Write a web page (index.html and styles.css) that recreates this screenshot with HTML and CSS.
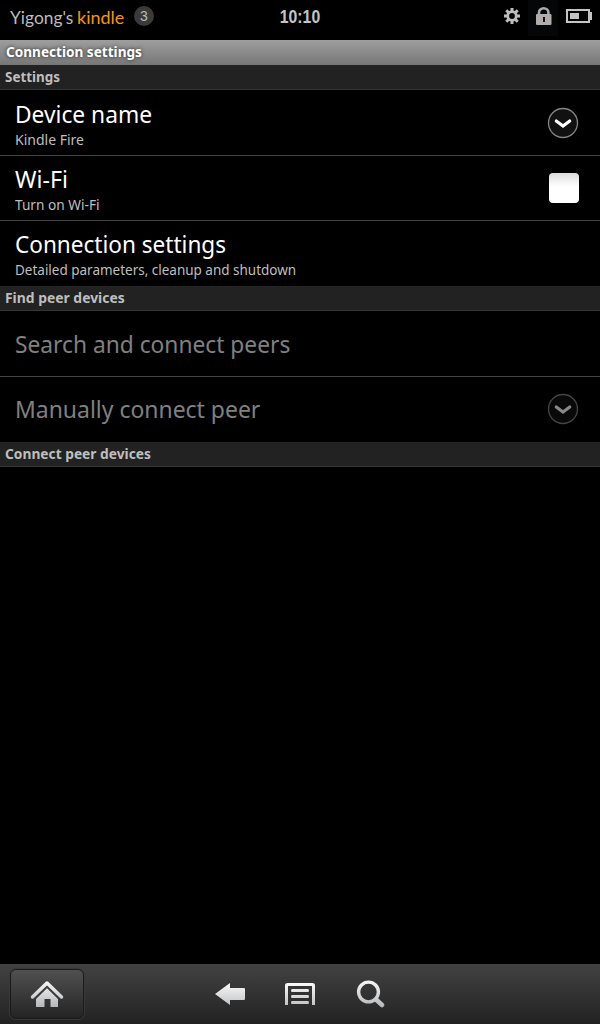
FILE: index.html
```html
<!DOCTYPE html>
<html lang="en">
<head>
<meta charset="utf-8">
<title>Connection settings</title>
<link rel="stylesheet" href="styles.css">
</head>
<body>
<header class="status">
  <div class="owner"><span class="user"><span class="fit w-user">Yigong's</span></span><span class="brand">kindle</span><span class="count">3</span></div>
  <time class="clock">10:10</time>
  <div class="indicators">
    <svg class="gear" width="16" height="16" viewBox="-8 -8 16 16"><g stroke="#bdbdbd" stroke-width="3"><path d="M0-8V-4M0 8V4M-8 0H-4M8 0H4M-5.700-5.700L-3-3M5.700 5.700L3 3M-5.700 5.700L-3 3M5.700-5.700L3-3"/><circle r="4.300" fill="none" stroke-width="2.800"/></g></svg>
    <span class="lock"><svg width="30" height="36" viewBox="0 0 30 36"><path d="M11 16V12.500a4.700 4.200 0 0 1 9.400 0V16" fill="none" stroke="#aaa" stroke-width="2.600"/><rect x="8" y="14" width="15.500" height="11" rx="1" fill="#b0acac"/><path d="M16 17v5" stroke="#111" stroke-width="2"/></svg></span>
    <svg class="battery" width="26" height="14" viewBox="0 0 26 14"><rect x="1" y="1" width="22" height="12" fill="none" stroke="#c4c4c4" stroke-width="2"/><path d="M24 3h2v8h-2zM4 4h9v6H4z" fill="#c4c4c4"/></svg>
  </div>
</header>
<h1 class="title"><span class="fit w-title">Connection settings</span></h1>
<main class="content">
  <h2 class="section"><span class="fit w-settings">Settings</span></h2>
  <div class="row">
    <div class="label"><span class="name fit">Device name</span><span class="summary">Kindle Fire</span></div>
    <svg class="more" width="32" height="32" viewBox="0 0 32 32"><circle cx="16" cy="16" r="14.500" fill="#111" stroke="#858585" stroke-width="1.300"/><path d="M9.300 14L16 19l6.700-5" fill="none" stroke="#fff" stroke-width="3.200" stroke-linecap="round"/></svg>
  </div>
  <div class="row">
    <div class="label"><span class="name fit w-wifi">Wi-Fi</span><span class="summary fit w-turn">Turn on Wi-Fi</span></div>
    <span class="checkbox"></span>
  </div>
  <div class="row last">
    <div class="label"><span class="name fit w-conn">Connection settings</span><span class="summary fit w-detail">Detailed parameters, cleanup and shutdown</span></div>
  </div>
  <h2 class="section"><span class="fit w-find">Find peer devices</span></h2>
  <div class="row disabled">
    <div class="label"><span class="name fit">Search and connect peers</span></div>
  </div>
  <div class="row disabled last">
    <div class="label"><span class="name fit w-manual">Manually connect peer</span></div>
    <svg class="more" width="32" height="32" viewBox="0 0 32 32"><circle cx="16" cy="16" r="14.500" fill="#090909" stroke="#454545" stroke-width="1.300"/><path d="M9.300 14L16 19l6.700-5" fill="none" stroke="#888" stroke-width="3.200" stroke-linecap="round"/></svg>
  </div>
  <h2 class="section"><span class="fit w-peer">Connect peer devices</span></h2>
</main>
<nav class="toolbar">
  <svg class="defs" width="0" height="0"><defs>
    <linearGradient id="silver" gradientUnits="userSpaceOnUse" x1="0" y1="0" x2="0" y2="28"><stop stop-color="#fafafa"/><stop offset="1" stop-color="#b3b5b7"/></linearGradient>
  </defs></svg>
  <div class="home"><svg width="34" height="28" viewBox="0 0 34 28"><path d="M2.500 17L17 3l14.500 14" fill="none" stroke="url(#silver)" stroke-width="3.500" stroke-linecap="round" stroke-linejoin="round"/><path d="M17 8.300L28 19v8h-7.500v-8h-6v8H6v-8z" fill="url(#silver)"/></svg></div>
  <div class="actions">
    <svg class="back" width="30" height="22" viewBox="0 0 30 22"><path d="M0 11L15 0v5h14q1 0 1 1v10q0 1-1 1H15v5z" fill="url(#silver)"/></svg>
    <svg class="menu" width="30" height="22" viewBox="0 0 30 22"><path d="M1.500 22V2.500q0-1 1-1h25q1 0 1 1V22" fill="none" stroke="url(#silver)" stroke-width="3"/><path d="M7 6h16q1 0 1 1.500T23 9H7Q6 9 6 7.500T7 6zM7 12h16q1 0 1 1.500T23 15H7q-1 0-1-1.500T7 12zM7 18h16q1 0 1 1.500T23 21H7q-1 0-1-1.500T7 18z" fill="url(#silver)"/></svg>
    <svg class="find" width="30" height="28" viewBox="0 0 30 28"><circle cx="13.500" cy="12" r="9.900" fill="none" stroke="url(#silver)" stroke-width="3.400"/><path d="M21 19.500l6 5.500" stroke="url(#silver)" stroke-width="4.500" stroke-linecap="round"/></svg>
  </div>
</nav>
</body>
</html>
```
FILE: styles.css
```css
* { box-sizing: border-box; }
body { margin: 0; width: 600px; height: 1024px; background: #000; color: #fff; font-family: "Noto Sans", sans-serif; display: flex; flex-direction: column; overflow: hidden; }
h1, h2 { margin: 0; }
svg { display: block; flex: none; }

/* condenses a line of text slightly, keeping its left edge */
.fit { display: block; width: max-content; transform: scaleX(var(--fit, .948)); transform-origin: left; }
.w-user { --fit: .965; }
.w-title { --fit: .971; }
.w-settings { --fit: .96; }
.w-wifi { --fit: .965; }
.w-turn { --fit: .977; }
.w-conn { --fit: .94; }
.w-detail { --fit: .963; }
.w-find { --fit: .992; }
.w-manual { --fit: .956; }
.w-peer { --fit: .983; }

.status { height: 40px; flex: none; display: grid; grid-template-columns: 1fr 60px 1fr; }
.owner { display: flex; height: 34px; align-items: center; padding-left: 10px; font-family: Lato, sans-serif; font-size: 18px; line-height: 34px; white-space: nowrap; }
.user { color: #bdbdbd; width: 67px; }
.brand { color: #f7941d; width: 57px; }
.count { width: 20px; height: 20px; margin-top: -2px; border-radius: 50%; background: #3a3a3a; color: #bbb; font: 14px/20px "Liberation Sans", sans-serif; text-align: center; }
.clock { color: #c4c4c4; font: bold 19px/34px "Liberation Sans", sans-serif; text-align: center; transform: scaleX(.83); }
.indicators { display: flex; justify-content: flex-end; padding-right: 8px; }
.gear { margin: 8px 8px 0 0; }
.lock { width: 30px; height: 36px; background: #050607; margin-right: 8px; }
.battery { margin-top: 9px; }
.title { height: 25px; flex: none; padding-left: 6px; background: linear-gradient(#9e9e9e, #777); font-size: 14px; line-height: 24px; text-shadow: 0 0 4px #222; }
.content { flex: 1; }
.section { height: 25px; padding-left: 5px; background: #222; border-bottom: 1px solid #353535; font-size: 14px; line-height: 24px; color: #bebebe; }
.row { height: 65px; display: flex; justify-content: space-between; align-items: center; padding: 0 21px 0 15px; border-bottom: 1px solid #444; }
.section + .row { height: 66px; }
.row.last { border-bottom: 0; }
.label { display: flex; flex-direction: column; align-self: flex-start; padding-top: 7px; white-space: nowrap; }
.section + .row .label { padding-top: 8px; }
.name { font-size: 24px; line-height: 31px; }
.summary { margin-top: 1px; font-size: 14px; line-height: 19px; color: #bebebe; }
.disabled .name { color: #808080; }
.disabled .label { padding-top: 16px; }
.section + .disabled .label { padding-top: 17px; }
.disabled .more { margin-top: -1px; }
.checkbox { width: 30px; height: 30px; border-radius: 4px; background: linear-gradient(#ddd, #fff 45%); }
.toolbar { height: 60px; flex: none; display: flex; background: linear-gradient(#424242, #222); }
.defs { position: absolute; }
.home { width: 74px; height: 50px; margin: 5px 0 0 10px; border: 1px solid #1a1a1a; border-radius: 6px; background: linear-gradient(#505050, #242424); box-shadow: 0 0 0 1px #383838; display: flex; align-items: center; justify-content: center; }
.actions { display: flex; align-items: center; margin-left: 131px; gap: 40px; }
```
